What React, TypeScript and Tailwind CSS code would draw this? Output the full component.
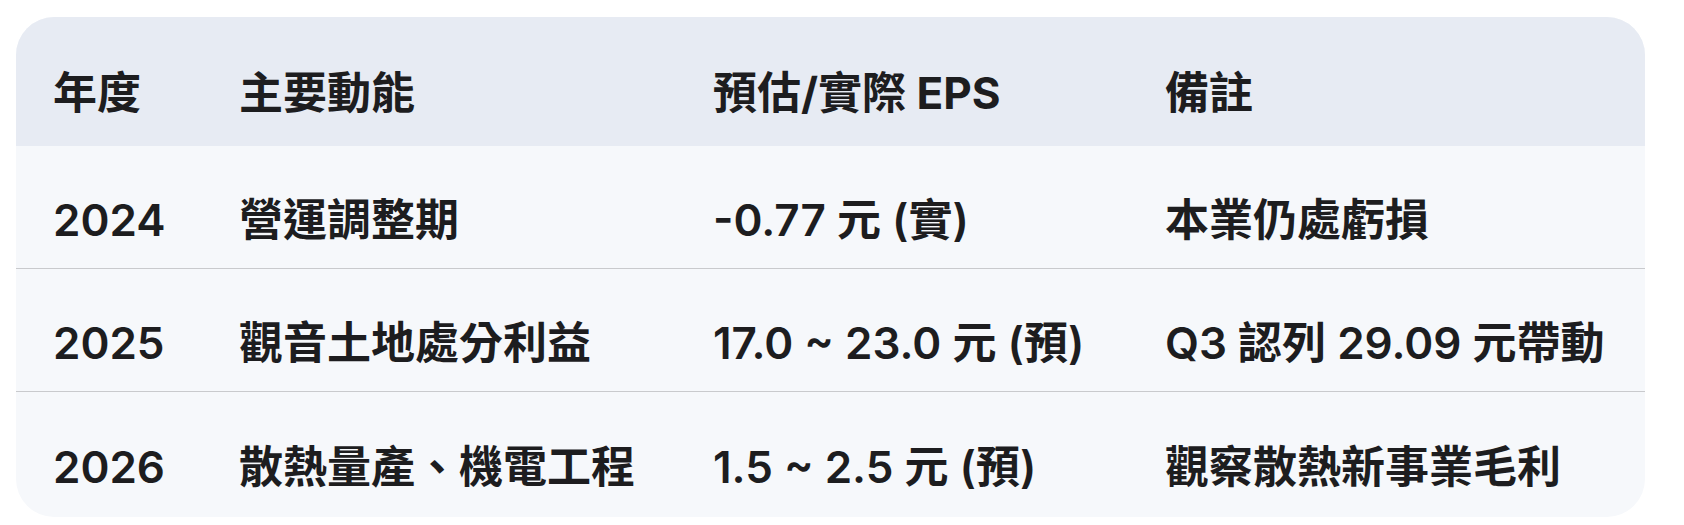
const rows = [
  { year: "2024", driver: "營運調整期", eps: "-0.77 元 (實)", note: "本業仍處虧損" },
  { year: "2025", driver: "觀音土地處分利益", eps: "17.0 ~ 23.0 元 (預)", note: "Q3 認列 29.09 元帶動" },
  { year: "2026", driver: "散熱量產、機電工程", eps: "1.5 ~ 2.5 元 (預)", note: "觀察散熱新事業毛利" },
]

const cols = "grid grid-cols-[186px_474px_452px_517px]"

export default function App() {
  return (
    <div className="min-h-screen bg-white pt-[17px] pl-[16px] font-['Inter','Noto_Sans_CJK_TC',sans-serif] text-[44px] text-[#1d1d1f]">
      <div className="w-[1629px] overflow-hidden rounded-[38px] bg-[#f6f8fb]">
        {/* header */}
        <div className={`${cols} h-[129px] bg-[#e7ebf3] font-bold`}>
          {["年度", "主要動能", "預估/實際 EPS", "備註"].map((h) => (
            <div key={h} className="flex items-center pl-[37px] pt-[23px] leading-[1.2] whitespace-nowrap">
              {h}
            </div>
          ))}
        </div>
        {/* body */}
        {rows.map((r, i) => (
          <div
            key={r.year}
            className={`${cols} font-semibold ${i < rows.length - 1 ? "h-[123px] border-b border-[#c9cacd]" : "h-[125px]"}`}
          >
            <div className="flex items-center pl-[37px] pt-[26px] leading-[1.2] whitespace-nowrap">{r.year}</div>
            <div className="flex items-center pl-[37px] pt-[26px] leading-[1.2] whitespace-nowrap">{r.driver}</div>
            <div className="flex items-center pl-[37px] pt-[26px] leading-[1.2] whitespace-nowrap">{r.eps}</div>
            <div className="flex items-center pl-[37px] pt-[26px] leading-[1.2] whitespace-nowrap">{r.note}</div>
          </div>
        ))}
      </div>
    </div>
  )
}
